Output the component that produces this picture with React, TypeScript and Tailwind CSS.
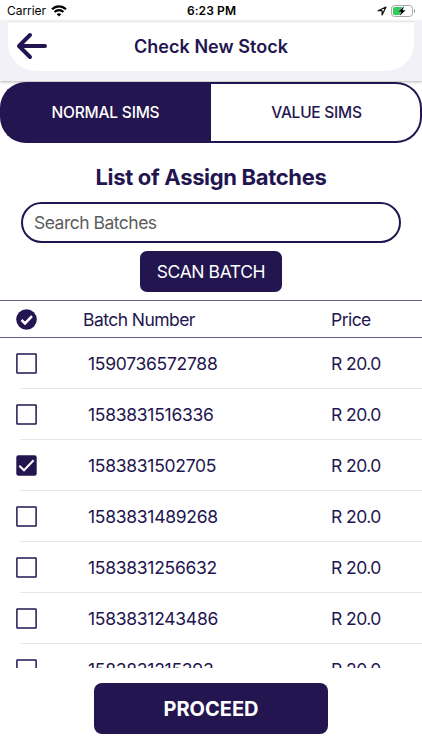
import React, { useState } from 'react';

const batches = [
  { number: '1590736572788', price: 'R 20.0' },
  { number: '1583831516336', price: 'R 20.0' },
  { number: '1583831502705', price: 'R 20.0' },
  { number: '1583831489268', price: 'R 20.0' },
  { number: '1583831256632', price: 'R 20.0' },
  { number: '1583831243486', price: 'R 20.0' },
  { number: '1583831215393', price: 'R 20.0' },
];

const StatusBar = () => (
  <div className="grid h-[21px] shrink-0 grid-cols-3 items-center pl-[7px] pr-[6px] text-[12px] leading-none text-black">
    <div className="flex items-center gap-[5px] pt-px">
      <span className="tracking-[-0.05px]">Carrier</span>
      <svg width="16" height="12" viewBox="0 0 16 12" fill="none" stroke="#000" strokeWidth="2.3">
        <path d="M1 4.3C5 .3 11 .3 15 4.3" />
        <path d="M3.6 7c2.5-2.5 6.3-2.5 8.8 0" />
        <path d="M8 11.5 5.7 9.2c1.3-1.2 3.3-1.2 4.6 0z" fill="#000" stroke="none" />
      </svg>
    </div>
    <span className="pt-px text-center font-semibold tracking-[0.1px]">6:23 PM</span>
    <div className="flex items-center justify-end gap-[4px]">
      <svg width="10" height="10" viewBox="0 0 10 10" fill="none" stroke="#111" strokeWidth="1.2" strokeLinejoin="round">
        <path d="M9 1 1 4.7h4.1V9z" />
      </svg>
      {/* Charging battery */}
      <svg width="25" height="12" viewBox="0 0 25 12">
        <rect x=".5" y=".5" width="21" height="11" rx="3" fill="#fff" stroke="#a8a8a8" />
        <path d="M3.5 2H11.5L7.5 7h2.5L8.5 10h-5A1.5 1.5 0 0 1 2 8.5v-5A1.5 1.5 0 0 1 3.5 2z" fill="#35cb5b" />
        <path d="M13 1.3 7.4 6.7h2.9L8.7 10.7l5.9-5.5h-3z" fill="#000" />
        <path d="M23 4v4c1.6-.6 1.6-3.4 0-4z" fill="#9a9a9a" />
      </svg>
    </div>
  </div>
);

const Header = () => (
  <header className="h-[60px] shrink-0 bg-[#f2f1f8] px-[8px] shadow-[0_1px_3px_rgba(0,0,0,0.3)]">
    <div className="grid h-[50px] grid-cols-[60px_1fr_60px] items-center rounded-b-[28px] bg-white shadow-[inset_0_2px_2px_-1px_rgba(0,0,0,0.12)]">
      <button className="pl-[8px]" aria-label="Back">
        <svg width="32" height="28" viewBox="0 0 32 28" fill="none" stroke="#231650" strokeWidth="4" strokeLinecap="round" strokeLinejoin="round">
          <path d="M14 3 3 14l11 11M3.5 14H29" />
        </svg>
      </button>
      <h1 className="text-center text-[18px] font-semibold tracking-[0.05px]">Check New Stock</h1>
    </div>
  </header>
);

const Checkbox = ({ checked, onClick }: { checked: boolean; onClick: () => void }) => (
  <button role="checkbox" aria-checked={checked} onClick={onClick} className="h-[21px] w-[21px]">
    <svg width="21" height="21" viewBox="0 0 21 21" fill="none">
      {checked ? (
        <>
          <rect x=".3" y=".3" width="20.4" height="20.4" rx="2.2" fill="#231650" />
          <path d="m3.3 10.8 4.7 4.5L17.6 5.2" stroke="#fff" strokeWidth="2" />
        </>
      ) : (
        <rect x=".9" y=".9" width="19.2" height="19.2" rx=".5" stroke="#231650" strokeWidth="1.5" />
      )}
    </svg>
  </button>
);

export default function App() {
  const [tab, setTab] = useState('normal');
  const [selected, setSelected] = useState<string[]>(['1583831502705']);

  const toggle = (number: string) => {
    setSelected(selected.includes(number) ? selected.filter((n) => n !== number) : [...selected, number]);
  };

  return (
    <div className="flex h-[750px] w-[422px] flex-col overflow-hidden bg-white font-['Inter','Liberation_Sans',sans-serif] text-[#231650]">
      <StatusBar />
      <Header />

      {/* SIM type tabs */}
      <div className="relative mt-px flex h-[61px] shrink-0 text-[15.5px] font-medium">
        <button
          onClick={() => setTab('normal')}
          className={`flex-1 rounded-l-[26px] border-2 border-r-0 border-[#231650] pr-[2px] tracking-[-0.2px] ${tab === 'normal' ? 'bg-[#231650] text-white' : 'bg-white'}`}
        >
          NORMAL SIMS
        </button>
        <button
          onClick={() => setTab('value')}
          className={`flex-1 rounded-r-[26px] border-2 border-l-0 border-[#231650] pl-[2px] tracking-[-0.25px] ${tab === 'value' ? 'bg-[#231650] text-white' : 'bg-white'}`}
        >
          VALUE SIMS
        </button>
      </div>

      <h2 className="mt-[19px] text-center text-[22px] font-bold leading-[30px] tracking-[-0.33px]">List of Assign Batches</h2>

      <input
        className="mx-[21px] mt-[10px] h-[41px] shrink-0 rounded-full border-2 border-[#231650] px-[11px] text-[17.5px] tracking-[-0.5px] outline-none placeholder:text-[#5c5c5c]"
        placeholder="Search Batches"
      />

      <button className="mx-auto mt-[8px] h-[41px] w-[142px] shrink-0 rounded-[7px] bg-[#231650] pt-[2px] text-[17.5px] tracking-[-0.4px] text-white">
        SCAN BATCH
      </button>

      <div className="mt-[8px] grid h-[38px] shrink-0 grid-cols-[67px_248px_1fr] items-center border-y border-[#675d89] pl-[16px] text-[17.5px]">
        <svg width="21" height="21" viewBox="0 0 21 21">
          <circle cx="10.5" cy="10.5" r="10.3" fill="#231650" />
          <path d="m5.5 11 3.5 3.4L16 7.2" fill="none" stroke="#fff" strokeWidth="2.5" />
        </svg>
        <span className="pt-[2px] tracking-[-0.55px]">Batch Number</span>
        <span className="pt-[2px] tracking-[-0.55px]">Price</span>
      </div>

      {/* Scrolling batch list */}
      <div className="h-[330px] shrink-0 overflow-hidden">
        {batches.map((batch) => (
          <div key={batch.number} className="h-[51px] text-[17.5px]">
            <div className="grid h-[50px] grid-cols-[72px_243px_1fr] items-center pl-[16px]">
              <Checkbox checked={selected.includes(batch.number)} onClick={() => toggle(batch.number)} />
              <span className="pt-[2px] tracking-[-0.28px]">{batch.number}</span>
              <span className="pt-[2px] tracking-[-0.55px]">{batch.price}</span>
            </div>
            <div className="ml-[20px] h-px bg-[#e6e6ea]" />
          </div>
        ))}
      </div>

      <button className="mx-auto mt-[15px] h-[51px] w-[234px] shrink-0 rounded-[8px] bg-[#231650] pt-px text-[20px] font-bold text-white">
        PROCEED
      </button>
    </div>
  );
}
